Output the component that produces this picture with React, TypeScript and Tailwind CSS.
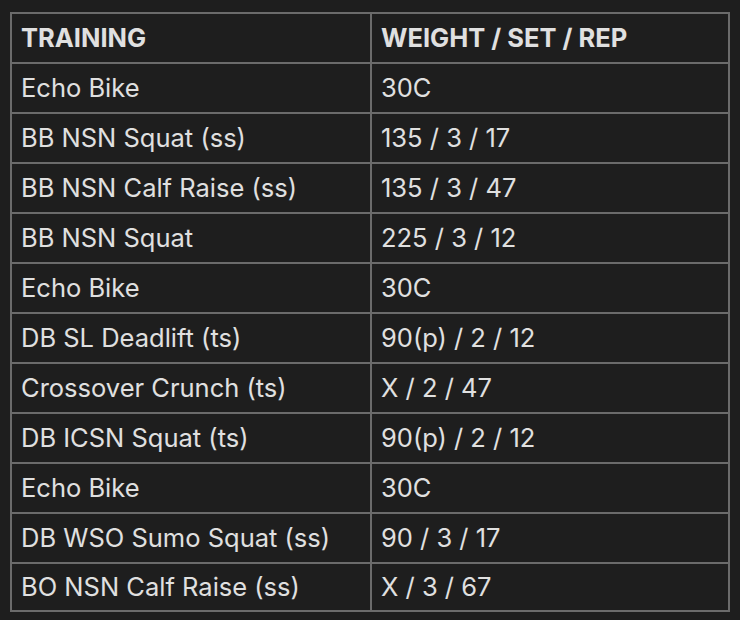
import React from "react";

const rows: [string, string][] = [
  ["Echo Bike", "30C"],
  ["BB NSN Squat (ss)", "135 / 3 / 17"],
  ["BB NSN Calf Raise (ss)", "135 / 3 / 47"],
  ["BB NSN Squat", "225 / 3 / 12"],
  ["Echo Bike", "30C"],
  ["DB SL Deadlift (ts)", "90(p) / 2 / 12"],
  ["Crossover Crunch (ts)", "X / 2 / 47"],
  ["DB ICSN Squat (ts)", "90(p) / 2 / 12"],
  ["Echo Bike", "30C"],
  ["DB WSO Sumo Squat (ss)", "90 / 3 / 17"],
  ["BO NSN Calf Raise (ss)", "X / 3 / 67"],
];

export default function App() {
  return (
    <div
      className="w-[740px] h-[620px] bg-[#1e1e1e] pt-[12px] pl-[10px] text-[#e0e0e0]"
      style={{ fontFamily: "Inter, 'Noto Sans', sans-serif" }}
    >
      <div className="w-[720px] border-2 border-[#6b6b6b]">
        <div className="flex h-[48px] items-center font-bold text-[25.5px]">
          <div className="w-[360px] h-full flex items-center px-[9px] border-r-2 border-[#6b6b6b]">TRAINING</div>
          <div className="flex-1 h-full flex items-center px-[9px]">WEIGHT / SET / REP</div>
        </div>
        {rows.map(([a, b], i) => (
          <div
            key={i}
            className={`flex items-center border-t-2 border-[#6b6b6b] text-[25.5px] ${i === rows.length - 1 ? "h-[48px]" : "h-[50px]"}`}
          >
            <div className="w-[360px] h-full flex items-center px-[9px] border-r-2 border-[#6b6b6b]">{a}</div>
            <div className="flex-1 h-full flex items-center px-[9px]">{b}</div>
          </div>
        ))}
      </div>
    </div>
  );
}
